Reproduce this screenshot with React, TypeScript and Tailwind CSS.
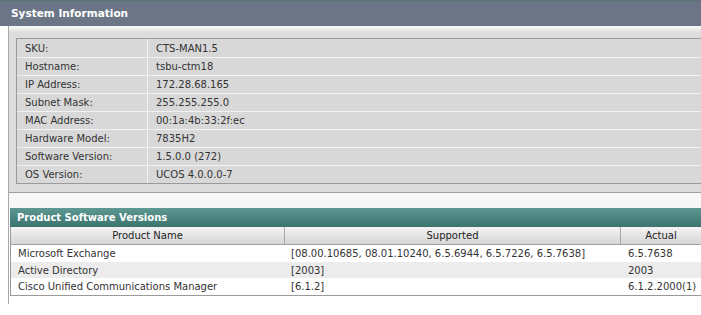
const sysInfo: [string, string][] = [
  ['SKU:', 'CTS-MAN1.5'],
  ['Hostname:', 'tsbu-ctm18'],
  ['IP Address:', '172.28.68.165'],
  ['Subnet Mask:', '255.255.255.0'],
  ['MAC Address:', '00:1a:4b:33:2f:ec'],
  ['Hardware Model:', '7835H2'],
  ['Software Version:', '1.5.0.0 (272)'],
  ['OS Version:', 'UCOS 4.0.0.0-7'],
];

const products: [string, string, string][] = [
  ['Microsoft Exchange', '[08.00.10685, 08.01.10240, 6.5.6944, 6.5.7226, 6.5.7638]', '6.5.7638'],
  ['Active Directory', '[2003]', '2003'],
  ['Cisco Unified Communications Manager', '[6.1.2]', '6.1.2.2000(1)'],
];

export default function App() {
  return (
    <div className="w-[701px] h-[315px] overflow-hidden bg-white text-[10px] text-[#333] font-['DejaVu_Sans',Verdana,sans-serif]">
      {/* page title */}
      <div className="h-[26px] border-t border-[#587572] bg-[#6b7586] pl-[11px] flex items-center">
        <span className="text-[10.5px] font-bold text-white">System Information</span>
      </div>

      <div className="ml-[8px] border-l border-[#a8a8a8] overflow-hidden">
        {/* system info panel */}
        <div className="bg-gradient-to-b from-[#fafafa] to-[#dcdcdc] h-[7px]" />
        <div className="bg-[#dcdcdc] pt-[5px] pl-[7px] pb-[8px] border-b border-[#a0a0a0]">
          <div className="w-[720px] border-t border-l border-b border-[#9a9a9a] bg-[#d8d8d8]">
            {sysInfo.map(([k, v], i) => (
              <div
                key={k}
                className={`flex h-[18px] items-center ${i > 0 ? 'border-t border-[#f2f2f2]' : ''}`}
              >
                <div className="w-[131px] pl-[8px] h-full flex items-center border-r border-[#f2f2f2]">{k}</div>
                <div className="pl-[8px]">{v}</div>
              </div>
            ))}
          </div>
        </div>

        {/* product versions */}
        <div className="h-[15px] bg-[#f7f7f7]" />
        <div className="ml-[1px] h-[19px] bg-gradient-to-b from-[#5d9893] to-[#3c746f] pl-[7px] flex items-center">
          <span className="font-bold text-white">Product Software Versions</span>
        </div>
        <div className="ml-[1px] border-b border-l border-[#9a9a9a]">
          <div className="flex h-[18px] bg-gradient-to-b from-[#f4f4f4] to-[#d6d6d6] border-b border-[#a0a0a0] text-[#222]">
            <div className="w-[274px] flex items-center justify-center border-r border-[#a8a8a8]">Product Name</div>
            <div className="w-[336px] flex items-center justify-center border-r border-[#a8a8a8]">Supported</div>
            <div className="flex-1 flex items-center justify-center">Actual</div>
          </div>
          {products.map(([name, sup, act], i) => (
            <div key={name} className={`flex h-[16.5px] pt-[1px] items-center ${i % 2 === 1 ? 'bg-[#ececec]' : 'bg-white'}`}>
              <div className="w-[274px] pl-[7px]">{name}</div>
              <div className="w-[337px] pl-[6px]">{sup}</div>
              <div className="flex-1 pl-[6px]">{act}</div>
            </div>
          ))}
        </div>
        <div className="h-[8px]" />
      </div>
    </div>
  );
}
